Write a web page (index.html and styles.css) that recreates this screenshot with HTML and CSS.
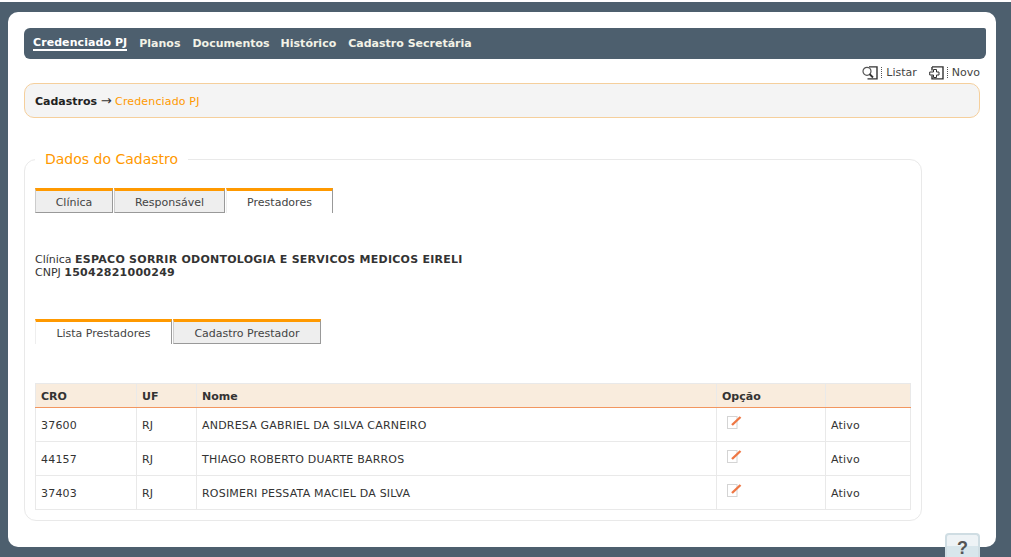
FILE: index.html
```html
<!DOCTYPE html>
<html lang="pt-BR">
<head>
<meta charset="utf-8">
<title>Credenciado PJ</title>
<link rel="stylesheet" href="styles.css">
</head>
<body>
<div class="page">
  <nav class="nav">
    <a class="nav-link current">Credenciado PJ</a>
    <a class="nav-link">Planos</a>
    <a class="nav-link tight">Documentos</a>
    <a class="nav-link">Histórico</a>
    <a class="nav-link">Cadastro Secretária</a>
  </nav>
  <div class="tools">
    <a class="tool">
      <svg class="tool-icon" width="16" height="14" viewBox="0 0 16 14"><path d="M7 .9h8v12H5.500" fill="none" stroke="#333" stroke-width="1.400"/><circle cx="5" cy="5.300" r="4" fill="#fff" stroke="#555" stroke-width="1.200"/><path d="M7.500 8l3.500 3.500" stroke="#333" stroke-width="1.800"/></svg>
      <span class="tool-sep"></span>Listar
    </a>
    <a class="tool">
      <svg class="tool-icon" width="15" height="14" viewBox="0 0 15 14"><path d="M3 .9h11v12H3V9.500M3 4.500V.9" fill="none" stroke="#333" stroke-width="1.400"/><path d="M4.500 3.500h3v2.500h2.500v3H7.500v2.500h-3V9H.7V6h3.800z" fill="#fff" stroke="#333"/></svg>
      <span class="tool-sep"></span>Novo
    </a>
  </div>
  <div class="crumb"><b>Cadastros</b> <span class="arrow">→</span> <span class="crumb-here">Credenciado PJ</span></div>
  <fieldset class="box">
    <legend class="box-title">Dados do Cadastro</legend>
    <div class="tabs">
      <a class="tab">Clínica</a>
      <a class="tab">Responsável</a>
      <a class="tab active">Prestadores</a>
    </div>
    <p class="info">Clínica <b>ESPACO SORRIR ODONTOLOGIA E SERVICOS MEDICOS EIRELI</b><br>CNPJ <b>15042821000249</b></p>
    <div class="tabs">
      <a class="tab active wide">Lista Prestadores</a>
      <a class="tab wide">Cadastro Prestador</a>
    </div>
    <table class="grid">
      <thead>
        <tr><th class="c-cro">CRO</th><th class="c-uf">UF</th><th class="c-nome">Nome</th><th class="c-op">Opção</th><th></th></tr>
      </thead>
      <tbody>
        <tr><td>37600</td><td>RJ</td><td>ANDRESA GABRIEL DA SILVA CARNEIRO</td><td class="op"><svg class="edit" width="16" height="15" viewBox="0 0 16 15"><rect x=".5" y="1.500" width="9.500" height="12" fill="#fff" stroke="#d4d4d4"/><path d="M5 10L13.500 2" stroke="#ee7744" stroke-width="2.400"/></svg></td><td>Ativo</td></tr>
        <tr><td>44157</td><td>RJ</td><td>THIAGO ROBERTO DUARTE BARROS</td><td class="op"><svg class="edit" width="16" height="15" viewBox="0 0 16 15"><rect x=".5" y="1.500" width="9.500" height="12" fill="#fff" stroke="#d4d4d4"/><path d="M5 10L13.500 2" stroke="#ee7744" stroke-width="2.400"/></svg></td><td>Ativo</td></tr>
        <tr><td>37403</td><td>RJ</td><td>ROSIMERI PESSATA MACIEL DA SILVA</td><td class="op"><svg class="edit" width="16" height="15" viewBox="0 0 16 15"><rect x=".5" y="1.500" width="9.500" height="12" fill="#fff" stroke="#d4d4d4"/><path d="M5 10L13.500 2" stroke="#ee7744" stroke-width="2.400"/></svg></td><td>Ativo</td></tr>
      </tbody>
    </table>
  </fieldset>
</div>
<a class="help">?</a>
</body>
</html>
```
FILE: styles.css
```css
* { box-sizing: border-box; }
html, body { height: 100%; }
body {
  margin: 0;
  height: 557px;
  overflow: hidden;
  background: #4d5f6e;
  border-top: 2px solid #fff;
  padding: 10px 15px 10px 8px;
  font: 11px/12px "DejaVu Sans", Verdana, sans-serif;
  color: #333;
}
.page {
  height: 535px;
  background: #fff;
  border-radius: 10px;
  padding: 16px 10px 0 16px;
}
.nav {
  height: 31px;
  background: #4d5f6e;
  border-radius: 6px 2px 6px 6px;
  display: flex;
  align-items: center;
  gap: 12px;
  padding: 0 9px;
}
.nav-link { color: #f2f2e6; font-weight: bold; }
.current { color: #fff; border-bottom: 2px solid #fff; letter-spacing: .07px; }
.tight { margin-right: -1px; }
.tools {
  height: 24px;
  display: flex;
  justify-content: flex-end;
  align-items: center;
  gap: 12px;
  padding: 3px 6px 0 0;
}
.tool { display: flex; align-items: center; color: #444; }
.tool-icon { margin-right: 3px; }
.tool-sep { height: 11px; border-left: 1px dotted #555; margin-right: 4px; }
.crumb {
  width: 956px;
  height: 35px;
  background: #f4f4f4;
  border: 1px solid #f5cf9c;
  border-radius: 10px;
  padding: 12px 10px 0;
}
.crumb b { color: #222; }
.arrow { font-size: 13px; line-height: 10px; }
.crumb-here { color: #ff9900; letter-spacing: .15px; }
.box {
  width: 896px;
  height: 371px;
  margin: 32px 0 0;
  padding: 20px 10px 0;
  border: 1px solid #e9e9e9;
  border-radius: 12px;
}
.box-title {
  padding: 0 10px;
  color: #ff9900;
  font-size: 14px;
  line-height: 18px;
}
.tabs { display: flex; gap: 1px; }
.tab {
  width: 78px;
  height: 25px;
  background: #eee;
  border-top: 3px solid #ff9900;
  border-right: 1px solid #999;
  border-bottom: 1px solid #999;
  border-left: 1px solid #ccc;
  text-align: center;
  line-height: 24px;
  color: #444;
}
.tab:nth-child(2) { width: 111px; }
.tab:nth-child(3) { width: 107px; }
.tab.active { background: #fff; border-bottom: 0; border-left-color: #eee; }
.tab.wide { width: 137px; }
.tab.wide:nth-child(2) { width: 148px; }
.info { margin: 40px 0 40px; line-height: 13px; }
.info b { color: #333; letter-spacing: .25px; }
.grid {
  width: 876px;
  margin-top: 39px;
  border-collapse: collapse;
  table-layout: fixed;
}
.grid th, .grid td { border: 1px solid #e9e9e9; padding: 0 5px; text-align: left; }
.grid th { height: 24px; padding-top: 2px; background: #f9ecdd; border-bottom: 1px solid #f2965f; color: #333; }
.grid td { height: 34px; padding-top: 3px; letter-spacing: .2px; }
.c-cro { width: 101px; }
.c-uf { width: 60px; }
.c-nome { width: 520px; }
.c-op { width: 109px; }
.grid td.op { padding: 0 0 5px 10px; }
.edit { display: block; }
.help {
  position: absolute;
  left: 945px;
  top: 533px;
  width: 35px;
  height: 24px;
  background: linear-gradient(#eef3f6 50%, #d8e6ec 50%);
  border: 2px solid #cfdde3;
  border-bottom: 0;
  border-radius: 4px 4px 0 0;
  text-align: center;
  font: bold 18px/27px "Liberation Sans", Arial, sans-serif;
  color: #555;
}
```
